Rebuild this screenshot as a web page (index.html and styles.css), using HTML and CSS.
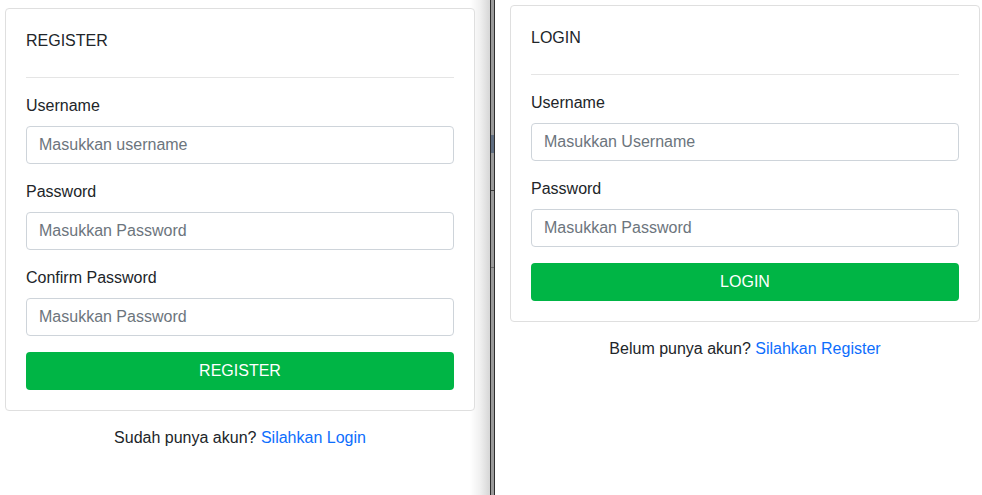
FILE: index.html
```html
<!DOCTYPE html>
<html lang="id">
<head>
<meta charset="utf-8">
<title>Register / Login</title>
<link rel="stylesheet" href="styles.css">
</head>
<body>
<div class="screen">
  <section class="pane pane-left">
    <div class="card">
      <div class="card-title">REGISTER</div>
      <hr class="rule">
      <div class="field">
        <label class="label">Username</label>
        <input class="control" type="text" placeholder="Masukkan username">
      </div>
      <div class="field">
        <label class="label">Password</label>
        <input class="control" type="password" placeholder="Masukkan Password">
      </div>
      <div class="field">
        <label class="label">Confirm Password</label>
        <input class="control" type="password" placeholder="Masukkan Password">
      </div>
      <button class="btn">REGISTER</button>
    </div>
    <p class="switch">Sudah punya akun? <a href="#">Silahkan Login</a></p>
  </section>
  <div class="divider"><span class="blip blip-blue"></span><span class="blip blip-line"></span><span class="blip blip-line2"></span></div>
  <section class="pane pane-right">
    <div class="card">
      <div class="card-title">LOGIN</div>
      <hr class="rule">
      <div class="field">
        <label class="label">Username</label>
        <input class="control" type="text" placeholder="Masukkan Username">
      </div>
      <div class="field">
        <label class="label">Password</label>
        <input class="control" type="password" placeholder="Masukkan Password">
      </div>
      <button class="btn">LOGIN</button>
    </div>
    <p class="switch">Belum punya akun? <a href="#">Silahkan Register</a></p>
  </section>
</div>
</body>
</html>
```
FILE: styles.css
```css
* { box-sizing: border-box; }
html, body { margin: 0; padding: 0; background: #fff; }
body {
  font-family: "Liberation Sans", Arial, sans-serif;
  font-size: 16px;
  line-height: 24px;
  color: #212529;
}
.screen {
  display: flex;
  height: 495px;
  overflow: hidden;
}
.pane-left {
  width: 490px;
  flex: none;
  padding: 8px 0 0 5px;
  background: linear-gradient(to right, #fff 0, #fff 470px, #f0f0f0 480px, #d6d6d6 490px);
}
.divider {
  width: 5px;
  flex: none;
  background: #9a9a9a;
  border-left: 1px solid #2e2e2e;
  border-right: 1px solid #2e2e2e;
  position: relative;
}
.blip { position: absolute; left: 0; right: 0; }
.blip-blue { top: 135px; height: 18px; background: #5f6d80; }
.blip-line { top: 190px; height: 1px; background: #3a3a3a; }
.blip-line2 { top: 267px; height: 1px; background: #6a6a6a; }
.pane-right {
  flex: 1;
  padding: 5px 0 0 15px;
}
.card {
  width: 470px;
  border: 1px solid #dfdfdf;
  border-radius: 4px;
  background: #fff;
  padding: 20px;
}
.card-title {
  margin: 0;
}
.rule {
  border: 0;
  border-top: 1px solid #e5e5e5;
  margin: 24px 0 16px;
}
.field { margin-bottom: 16px; }
.label {
  display: block;
  margin-bottom: 8px;
}
.control {
  display: block;
  width: 100%;
  height: 38px;
  padding: 6px 12px;
  font: inherit;
  color: #212529;
  background: #fff;
  border: 1px solid #ced4da;
  border-radius: 4px;
}
.control::placeholder { color: #6c757d; }
.btn {
  display: block;
  width: 100%;
  height: 38px;
  border: 0;
  border-radius: 4px;
  background: #00b545;
  color: #fff;
  font: inherit;
}
.switch {
  width: 470px;
  margin: 15px 0 0;
  text-align: center;
}
.switch a { color: #0d6efd; text-decoration: none; }
```
